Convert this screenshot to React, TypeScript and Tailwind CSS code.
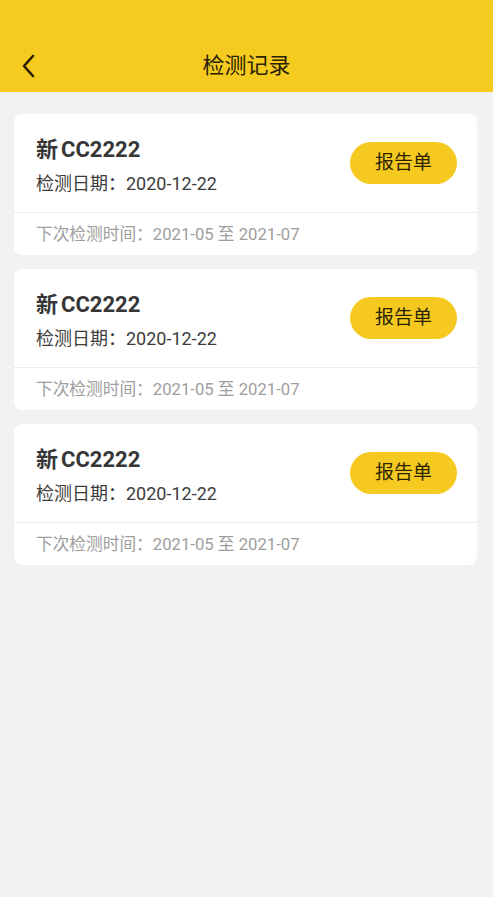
const records = [
  { plate: "新CC2222", date: "2020-12-22", next: "2021-05 至 2021-07" },
  { plate: "新CC2222", date: "2020-12-22", next: "2021-05 至 2021-07" },
  { plate: "新CC2222", date: "2020-12-22", next: "2021-05 至 2021-07" },
];

export default function App() {
  return (
    <main
      className="min-h-screen bg-[#f2f2f2] flex flex-col"
      style={{ fontFamily: "Roboto, 'Noto Sans CJK SC', sans-serif" }}
    >
      {/* header */}
      <header className="h-[92px] bg-[#f5cb1f] flex items-end">
        <div className="relative h-[50px] w-full flex items-center justify-center">
          <button className="absolute left-[18px] top-[11px] w-[20px] h-[26px] flex items-center justify-center">
            <svg width="14" height="24" viewBox="0 0 14 24" fill="none">
              <path d="M12 2 L3 12 L12 22" stroke="#2a1f05" strokeWidth="2.6" strokeLinecap="round" strokeLinejoin="round" />
            </svg>
          </button>
          <span className="text-[22px] leading-[28px] -mt-[2px] text-[#2b2205]">检测记录</span>
        </div>
      </header>

      {/* list */}
      <div className="flex flex-col gap-[14px] pl-[14px] pt-[22px] pr-[16px]">
        {records.map((r, i) => (
          <div key={i} className="bg-white rounded-[8px] flex flex-col">
            <div className="flex items-start justify-between pl-[22px] pr-[20px] pt-[22px] pb-[17px]">
              <div className="flex flex-col">
                <span className="text-[22px] leading-[27px] font-bold text-[#363636]">
                  新<span className="ml-[3px]">{r.plate.slice(1)}</span>
                </span>
                <span className="mt-[10px] text-[18px] leading-[22px] text-[#3c3c3c]">检测日期：{r.date}</span>
              </div>
              <button className="mt-[6px] w-[107px] h-[42px] rounded-full bg-[#f5c91f] text-[19px] text-[#2b2205]">
                报告单
              </button>
            </div>
            <div className="border-t border-[#ececec] h-[43px] pt-[2px] flex items-center pl-[22px] text-[16.7px] text-[#9e9e9e]">
              下次检测时间：{r.next}
            </div>
          </div>
        ))}
      </div>
    </main>
  );
}
